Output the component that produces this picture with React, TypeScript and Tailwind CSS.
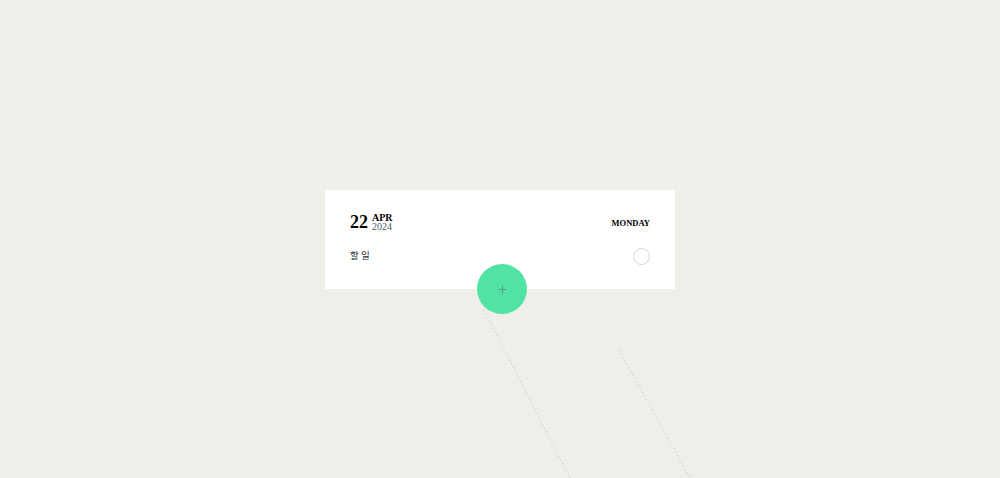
import { Plus } from "lucide-react";

export default function App() {
  return (
    <div className="relative h-[478px] w-full overflow-hidden bg-[#f0eee8] font-['Liberation_Serif','Noto_Sans_CJK_KR',serif]">
      {/* dotted guide lines */}
      <svg className="absolute inset-0 pointer-events-none" width="1000" height="478">
        <line x1="484" y1="310" x2="570" y2="478" stroke="#9fc9c0" strokeWidth="1" strokeDasharray="1 3" />
        <line x1="619" y1="350" x2="690" y2="478" stroke="#9fc9c0" strokeWidth="1" strokeDasharray="1 3" />
      </svg>

      <div className="flex justify-center pt-[190px]">
        <div className="relative w-[350px] bg-white px-[25px] pt-[23px] pb-[24px]">
          {/* header */}
          <div className="flex items-center justify-between">
            <div className="flex items-center gap-[4px] text-black">
              <span className="text-[18px] font-bold leading-none">22</span>
              <div className="flex flex-col leading-[9px]">
                <span className="text-[10px] font-bold">APR</span>
                <span className="text-[10px] text-gray-600">2024</span>
              </div>
            </div>
            <span className="mt-[3px] text-[8.5px] font-bold text-black">MONDAY</span>
          </div>

          {/* task row */}
          <div className="mt-[17px] flex items-center justify-between">
            <span className="text-[9.5px] text-gray-800">할 일</span>
            <div className="h-[17px] w-[17px] rounded-full border-[1.5px] border-gray-300" />
          </div>

          {/* add button */}
          <button className="absolute left-[152px] bottom-[-25px] flex h-[50px] w-[50px] items-center justify-center rounded-full bg-[#50e3a4]">
            <Plus className="h-[13px] w-[13px] text-gray-500" strokeWidth={1.2} />
          </button>
        </div>
      </div>
    </div>
  );
}
